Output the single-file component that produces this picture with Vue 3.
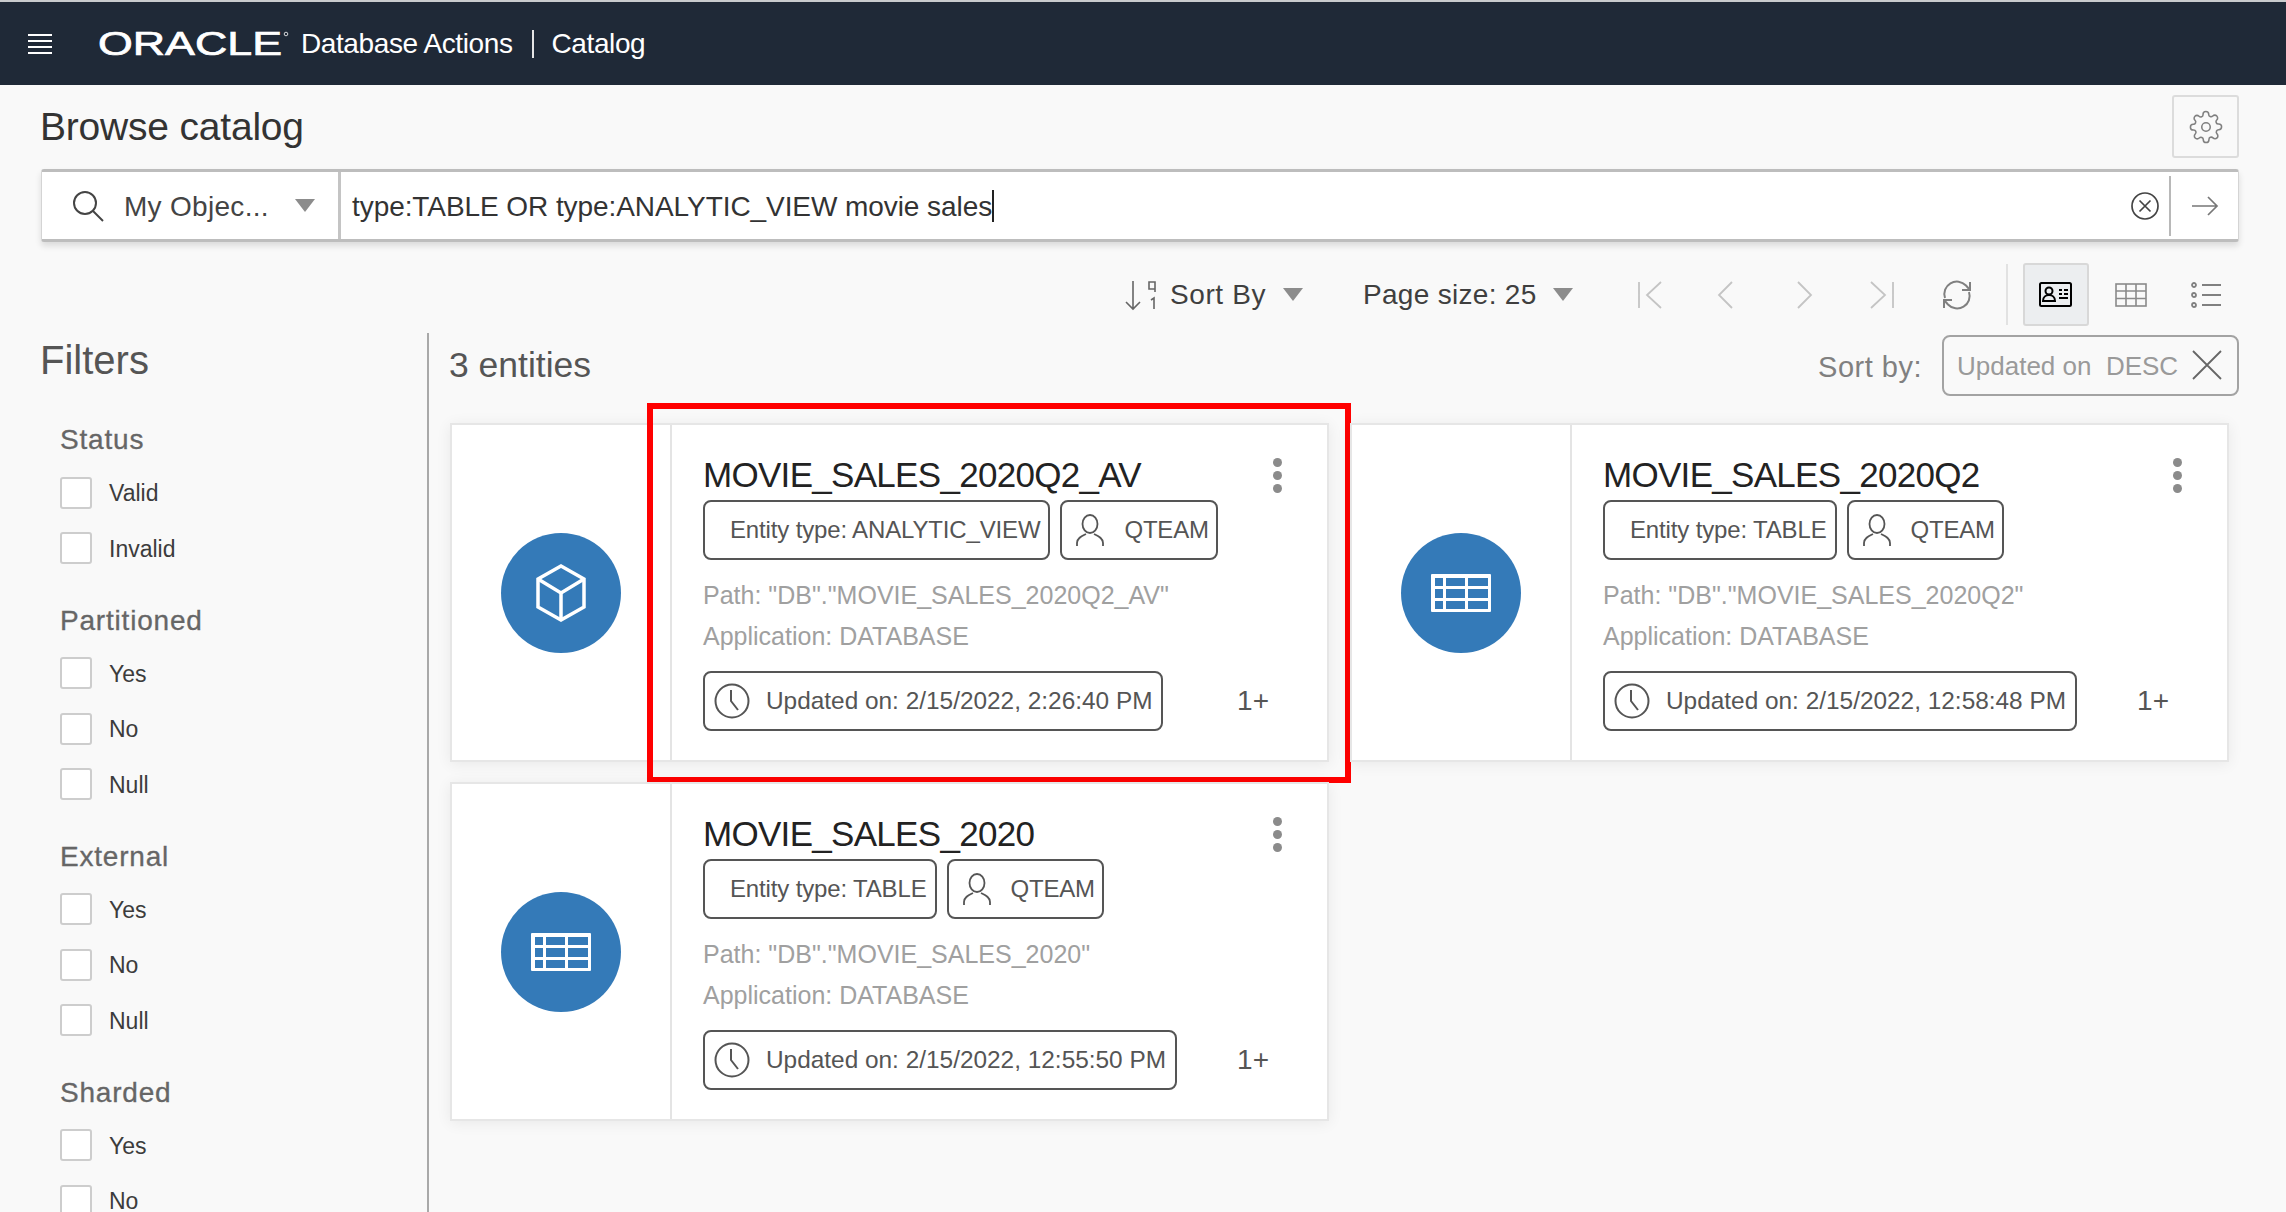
<script setup>
const groups = [
  { name: 'Status', items: ['Valid', 'Invalid'] },
  { name: 'Partitioned', items: ['Yes', 'No', 'Null'] },
  { name: 'External', items: ['Yes', 'No', 'Null'] },
  { name: 'Sharded', items: ['Yes', 'No'] },
]
const cards = [
  { title: 'MOVIE_SALES_2020Q2_AV', type: 'ANALYTIC_VIEW', path: '"DB"."MOVIE_SALES_2020Q2_AV"', updated: '2/15/2022, 2:26:40 PM', icon: 'cube', mark: true },
  { title: 'MOVIE_SALES_2020Q2', type: 'TABLE', path: '"DB"."MOVIE_SALES_2020Q2"', updated: '2/15/2022, 12:58:48 PM', icon: 'table' },
  { title: 'MOVIE_SALES_2020', type: 'TABLE', path: '"DB"."MOVIE_SALES_2020"', updated: '2/15/2022, 12:55:50 PM', icon: 'table' },
]
</script>

<template>
  <div class="app">
    <header class="topbar">
      <svg class="burger" width="24" height="20" viewBox="0 0 24 20"><path d="M0 1h24M0 7h24M0 13h24M0 19h24" stroke="#fff" stroke-width="2" /></svg>
      <svg class="logo" width="192" height="40" viewBox="0 0 192 40">
        <text x="0" y="31" font-family="Liberation Sans, sans-serif" font-size="33" fill="#fff" stroke="#fff" stroke-width="0.7" textLength="184" lengthAdjust="spacingAndGlyphs">ORACLE</text>
        <circle cx="188" cy="10" r="1.8" fill="none" stroke="#fff" stroke-width="0.8" />
      </svg>
      <span class="product">Database Actions</span>
      <span class="bar-div"></span>
      <span class="product">Catalog</span>
    </header>

    <div class="page">
      <div class="title-row">
        <h1>Browse catalog</h1>
        <button class="gear">
          <svg width="34" height="34" viewBox="0 0 24 24" fill="none" stroke="#808080" stroke-width="1.1"><circle cx="12" cy="12" r="3" /><path d="M19.4 15a1.65 1.65 0 0 0 .33 1.82l.06.06a2 2 0 1 1-2.83 2.83l-.06-.06a1.65 1.65 0 0 0-2.82 1.17V21a2 2 0 0 1-4 0v-.09a1.65 1.65 0 0 0-2.82-1.17l-.06.06a2 2 0 1 1-2.83-2.83l.06-.06a1.65 1.65 0 0 0-1.17-2.82H3a2 2 0 0 1 0-4h.09a1.65 1.65 0 0 0 1.17-2.82l-.06-.06a2 2 0 1 1 2.83-2.83l.06.06a1.65 1.65 0 0 0 2.82-1.17V3a2 2 0 0 1 4 0v.09a1.65 1.65 0 0 0 2.82 1.17l.06-.06a2 2 0 1 1 2.83 2.83l-.06.06a1.65 1.65 0 0 0 1.17 2.82H21a2 2 0 0 1 0 4h-.09a1.65 1.65 0 0 0-1.51 1z" /></svg>
        </button>
      </div>

      <div class="search">
        <div class="scope">
          <svg width="32" height="32" viewBox="0 0 32 32" fill="none" stroke="#444" stroke-width="2"><circle cx="13" cy="13" r="11" /><path d="M21 21l10 10" /></svg>
          <span class="scope-label">My Objec...</span>
          <i class="tri"></i>
        </div>
        <div class="query"><span class="query-text">type:TABLE OR type:ANALYTIC_VIEW movie sales</span><span class="caret"></span></div>
        <svg class="clear" width="30" height="30" viewBox="0 0 30 30" fill="none" stroke="#444" stroke-width="1.7"><circle cx="15" cy="15" r="13" /><path d="M9.5 9.5l11 11M20.5 9.5l-11 11" /></svg>
        <div class="go">
          <svg width="28" height="22" viewBox="0 0 28 22" fill="none" stroke="#777" stroke-width="1.7"><path d="M1 11h25M17 2l9 9-9 9" /></svg>
        </div>
      </div>

      <div class="toolbar">
        <svg class="sort-ic" width="34" height="32" viewBox="0 0 34 32" fill="none" stroke="#666" stroke-width="1.6"><path d="M9 2v28M2 23l7 7 7-7" /><path d="M25 3h6v7h-6zM31 10v3" /><path d="M27 21l3-2v11" /></svg>
        <span class="tool-text sort-label">Sort By</span>
        <i class="tri tri-sort"></i>
        <span class="tool-text page-label">Page size: 25</span>
        <i class="tri tri-page"></i>
        <svg class="nav first" width="24" height="28" viewBox="0 0 24 28" fill="none" stroke="#c4c4c4" stroke-width="1.8"><path d="M1 1v26M23 1L9 14l14 13" /></svg>
        <svg class="nav prev" width="16" height="28" viewBox="0 0 16 28" fill="none" stroke="#c4c4c4" stroke-width="1.8"><path d="M15 1L2 14l13 13" /></svg>
        <svg class="nav next" width="16" height="28" viewBox="0 0 16 28" fill="none" stroke="#c4c4c4" stroke-width="1.8"><path d="M1 1l13 13L1 27" /></svg>
        <svg class="nav last" width="24" height="28" viewBox="0 0 24 28" fill="none" stroke="#c4c4c4" stroke-width="1.8"><path d="M23 1v26M1 1l14 13L1 27" /></svg>
        <svg class="refresh" width="32" height="32" viewBox="0 0 32 32" fill="none" stroke="#808080" stroke-width="2"><path d="M4 19A12.5 12.5 0 0 1 25 6.5L29 11" /><path d="M28 13A12.5 12.5 0 0 1 7 25.500L3 21" /><path d="M29 3v8h-8M3 29v-8h8" /></svg>
        <span class="tool-div"></span>
        <button class="view on">
          <svg width="33" height="25" viewBox="0 0 33 25" fill="none" stroke="#000" stroke-width="2"><rect x="1" y="1" width="31" height="23" rx="1.500" /><circle cx="10" cy="9" r="3.500" /><path d="M4 19c0-8 12-8 12 0z" /><path d="M20 8h3M25 8h4M20 12h3M25 12h4M20 16h9" /></svg>
        </button>
        <svg class="grid-ic" width="32" height="24" viewBox="0 0 32 24" fill="none" stroke="#8a8a8a" stroke-width="1.600"><rect x="1" y="1" width="30" height="22" /><path d="M1 8h30M1 15.500h30M11 1v22M21 1v22" /></svg>
        <svg class="list-ic" width="30" height="26" viewBox="0 0 30 26" fill="none" stroke="#808080" stroke-width="1.800"><circle cx="3" cy="3" r="2" /><circle cx="3" cy="13" r="2" /><circle cx="3" cy="23" r="2" /><path d="M11 3h19M11 13h19M11 23h19" /></svg>
      </div>

      <div class="body">
        <aside class="filters">
          <h2>Filters</h2>
          <section v-for="g in groups" :key="g.name" class="group">
            <h3>{{ g.name }}</h3>
            <label v-for="it in g.items" :key="it" class="row"><span class="box"></span><span class="row-text">{{ it }}</span></label>
          </section>
        </aside>

        <main class="results">
          <div class="results-head">
            <span class="count">3 entities</span>
            <span class="sort-by">Sort by:</span>
            <div class="sort-chip">
              <span class="sort-value">Updated on&nbsp; DESC</span>
              <svg width="30" height="30" viewBox="0 0 30 30" fill="none" stroke="#666" stroke-width="1.800"><path d="M1 1l28 28M29 1L1 29" /></svg>
            </div>
          </div>

          <div class="cards">
            <article v-for="c in cards" :key="c.title" class="card">
              <div class="side">
                <div class="disc">
                  <svg v-if="c.icon === 'cube'" width="50" height="58" viewBox="0 0 50 58" fill="none" stroke="#fff" stroke-width="3.500"><path d="M25 2l23 13v28L25 56 2 43V15z" /><path d="M2 15l23 14 23-14M25 29v27" /></svg>
                  <svg v-else width="60" height="38" viewBox="0 0 60 38"><rect width="60" height="38" rx="1" fill="#fff" /><g fill="#347ab8"><rect x="4" y="4" width="8" height="8" /><rect x="15" y="4" width="19" height="8" /><rect x="37" y="4" width="20" height="8" /><rect x="4" y="15" width="8" height="9" /><rect x="15" y="15" width="19" height="9" /><rect x="37" y="15" width="20" height="9" /><rect x="4" y="27" width="8" height="8" /><rect x="15" y="27" width="19" height="8" /><rect x="37" y="27" width="20" height="8" /></g></svg>
                </div>
              </div>
              <div class="info">
                <div class="title-line">
                  <span class="name">{{ c.title }}</span>
                  <span class="kebab"><i></i><i></i><i></i></span>
                </div>
                <div class="chips">
                  <span class="chip type-chip">Entity type: {{ c.type }}</span>
                  <span class="chip owner-chip">
                    <svg width="28" height="33" viewBox="0 0 28 33" fill="none" stroke="#555" stroke-width="1.800"><ellipse cx="14" cy="10" rx="7.500" ry="9" /><path d="M1 32v-3c0-5 5-7 9-9M27 32v-3c0-5-5-7-9-9" /></svg>
                    QTEAM
                  </span>
                </div>
                <p class="meta first-meta">Path: {{ c.path }}</p>
                <p class="meta">Application: DATABASE</p>
                <div class="foot">
                  <span class="chip time-chip">
                    <svg width="36" height="36" viewBox="0 0 36 36" fill="none" stroke="#555" stroke-width="2"><circle cx="18" cy="18" r="16.500" /><path d="M17 7v11l7 9" /></svg>
                    Updated on: {{ c.updated }}
                  </span>
                  <span class="more">1+</span>
                </div>
              </div>
              <div v-if="c.mark" class="annotation"></div>
            </article>
          </div>
        </main>
      </div>
    </div>
  </div>
</template>

<style>
html, body { margin: 0; background: #f9f9f9; }
</style>

<style scoped>
* { box-sizing: border-box; }
.app {
  height: 1212px;
  overflow: hidden;
  background: #f9f9f9;
  border-top: 2px solid #c9cbcd;
  font-family: "Liberation Sans", Arial, sans-serif;
  color: #333;
}
.topbar {
  height: 83px;
  background: #1f2937;
  display: flex;
  align-items: center;
  padding-left: 28px;
  color: #fff;
}
.burger { margin-right: 46px; }
.logo { margin-right: 11px; }
.product { font-size: 28px; letter-spacing: -0.4px; font-weight: 400; }
.bar-div { width: 2px; height: 28px; background: #e5e5e5; margin: 0 18px 0 19px; }

.page { padding: 0 47px 0 41px; }
.title-row { display: flex; justify-content: space-between; align-items: center; padding-top: 10px; height: 73px; }
h1 { margin: 0 0 0 -1px; font-size: 39px; font-weight: 400; color: #333; letter-spacing: -0.2px; }
.gear {
  width: 67px; height: 63px; padding: 0; display: flex; align-items: center; justify-content: center;
  background: #f9f9f9; border: 2px solid #dcdcdc; border-radius: 3px;
}

.search {
  margin-top: 11px; height: 73px; background: #fff; display: flex; align-items: center;
  border: 1px solid #d4d4d4; border-top: 3px solid #bdbdbd; border-bottom: 3px solid #bdbdbd;
  border-radius: 3px; box-shadow: 0 4px 6px rgba(0, 0, 0, .12);
}
.scope { width: 299px; height: 100%; display: flex; align-items: center; padding-left: 30px; border-right: 3px solid #c4c4c4; }
.scope-label { margin-left: 20px; padding-top: 2px; font-size: 28px; letter-spacing: 0.3px; color: #444; white-space: nowrap; }
.tri { display: block; width: 0; height: 0; border-left: 10px solid transparent; border-right: 10px solid transparent; border-top: 13px solid #8c8c8c; }
.scope .tri { margin-left: 26px; }
.query { flex: 1; display: flex; align-items: center; padding-left: 11px; height: 100%; }
.query-text { padding-top: 2px; font-size: 28px; letter-spacing: -0.07px; color: #333; }
.caret { width: 2px; height: 32px; background: #222; margin-left: 0; }
.clear { margin-right: 9px; }
.go { width: 69px; height: 60px; display: flex; align-items: center; justify-content: center; border-left: 2px solid #b8b8b8; }

.toolbar { margin-top: 21px; height: 63px; display: flex; align-items: center; padding-left: 1083px; }
.tool-text { font-size: 28px; color: #3f3f3f; white-space: nowrap; }
.sort-label { margin-left: 12px; letter-spacing: 0.6px; }
.tri-sort { margin-left: 17px; }
.page-label { margin-left: 60px; letter-spacing: 0.3px; }
.tri-page { margin-left: 16px; }
.first { margin-left: 65px; }
.prev { margin-left: 55px; }
.next { margin-left: 64px; }
.last { margin-left: 57px; }
.refresh { margin-left: 47px; }
.tool-div { width: 2px; height: 61px; background: #e2e2e2; margin-left: 33px; }
.view { width: 66px; height: 63px; margin-left: 15px; padding: 0; display: flex; align-items: center; justify-content: center; border: 2px solid #d8d8d8; border-radius: 3px; background: #eceef0; }
.grid-ic { margin-left: 26px; }
.list-ic { margin-left: 44px; }

.body { margin-top: 7px; display: flex; }
.filters { width: 388px; height: 900px; border-right: 2px solid #a9a9a9; flex: none; }
h2 { margin: 0 0 0 -1px; height: 90px; padding-top: 5px; font-size: 40px; line-height: 44px; font-weight: 400; color: #555; }
.group { padding-left: 19px; margin-bottom: 27.5px; }
h3 { margin: 0 0 8px; height: 34px; line-height: 34px; font-size: 28px; font-weight: 400; color: #666; letter-spacing: 0.8px; -webkit-text-stroke: 0.3px #666; }
.row { display: flex; align-items: center; height: 55.5px; font-size: 23px; color: #3c3c3c; }
.row-text { padding-top: 2px; }
.box { width: 32px; height: 32px; border: 2px solid #cdcdcd; border-radius: 3px; background: #fff; margin-right: 17px; flex: none; }

.results { flex: 1; padding-left: 21px; min-width: 0; }
.results-head { height: 62px; display: flex; align-items: center; margin-bottom: 28px; }
.count { margin-left: -1px; padding-top: 2px; font-size: 35.5px; color: #555; }
.sort-by { margin-left: auto; font-size: 29px; letter-spacing: 0.5px; color: #808080; margin-right: 20px; margin-top: 6px; }
.sort-chip { width: 297px; height: 61px; margin-top: 2px; display: flex; align-items: center; justify-content: space-between; padding: 0 15px 0 13px; border: 2px solid #a3a3a3; border-radius: 8px; font-size: 26px; color: #9a9a9a; white-space: nowrap; }
.sort-value { padding-top: 3px; }

.cards { display: grid; grid-template-columns: 879px 879px; grid-auto-rows: 339px; gap: 20px 21px; }
.card { position: relative; display: flex; background: #fff; border: 2px solid #e6e6e6; box-shadow: 0 2px 14px rgba(0, 0, 0, .07); }
.side { width: 220px; flex: none; display: flex; align-items: center; justify-content: center; border-right: 2px solid #e4e4e4; }
.disc { width: 120px; height: 120px; border-radius: 50%; background: #347ab8; display: flex; align-items: center; justify-content: center; }
.info { flex: 1; min-width: 0; padding: 32px 30px 0 31px; }
.title-line { display: flex; justify-content: space-between; align-items: flex-start; height: 43px; }
.name { font-size: 35px; line-height: 36px; color: #222; letter-spacing: -0.7px; }
.kebab { display: flex; flex-direction: column; gap: 4px; margin: 1px 15px 0 0; }
.kebab i { display: block; width: 9px; height: 9px; border-radius: 50%; background: #8b8b8b; }
.chips { display: flex; gap: 10px; margin-top: 0; }
.chip { display: inline-flex; align-items: center; height: 60px; border: 2px solid #555; border-radius: 8px; color: #555; font-size: 24px; white-space: nowrap; }
.type-chip { padding: 0 8px 0 25px; letter-spacing: -0.15px; }
.owner-chip { padding: 0 7px 0 14px; gap: 20px; letter-spacing: -0.2px; }
.time-chip { padding: 0 9px; gap: 16px; font-size: 24.4px; }
.meta { margin: 0; height: 41px; line-height: 41px; font-size: 25px; color: #a0a0a0; }
.first-meta { margin-top: 15px; }
.foot { display: flex; align-items: center; justify-content: space-between; margin-top: 14px; padding-right: 28px; }
.more { font-size: 28px; color: #555; }
.annotation { position: absolute; left: 195px; top: -22px; width: 704px; height: 380px; border: 6px solid #f00; pointer-events: none; }
</style>
